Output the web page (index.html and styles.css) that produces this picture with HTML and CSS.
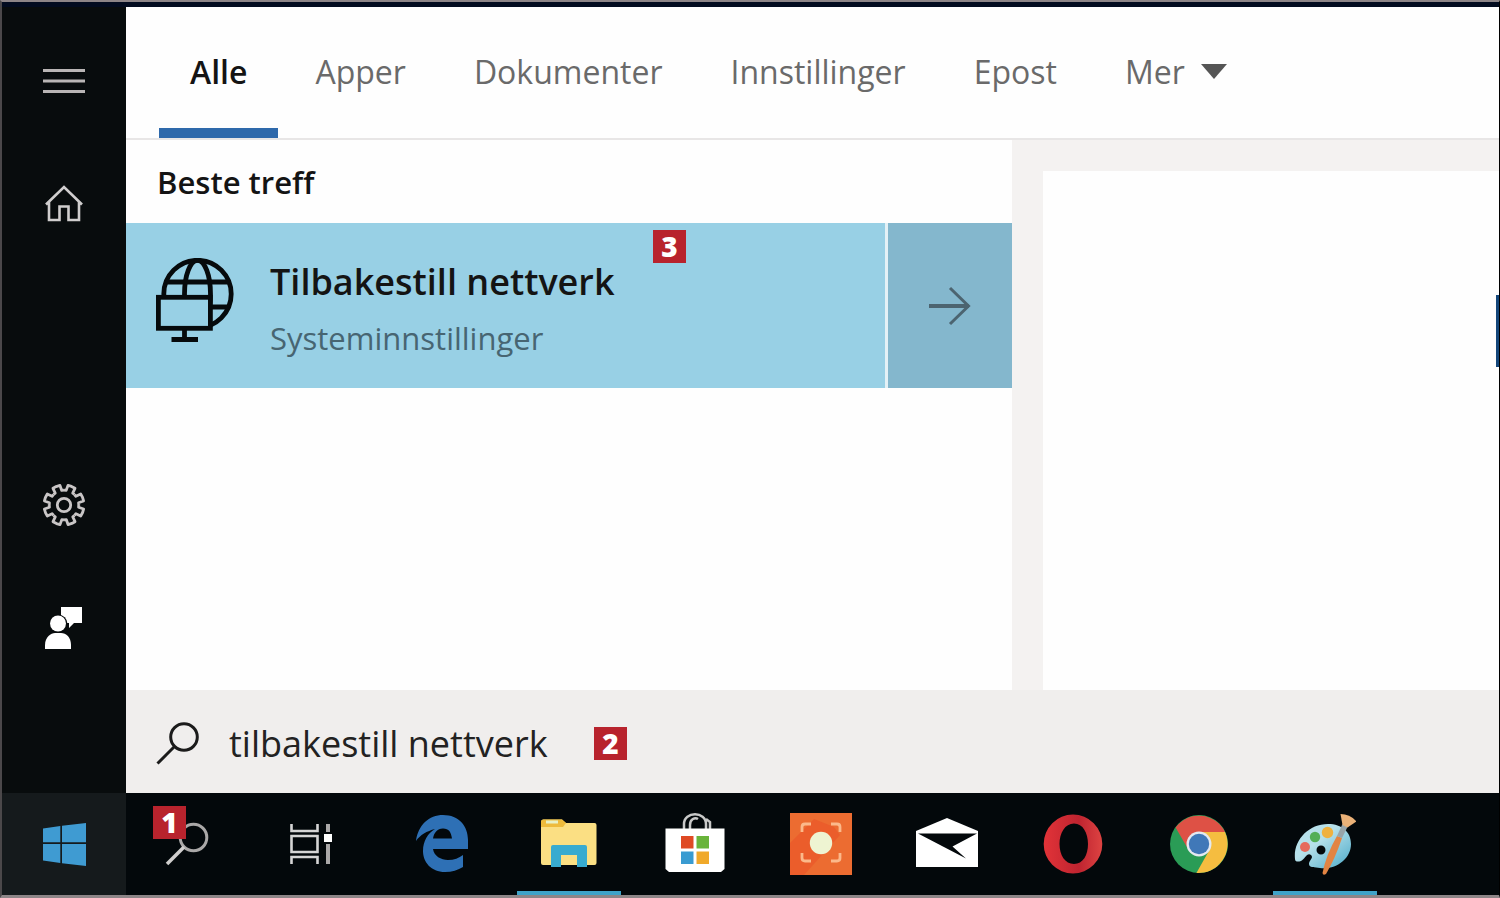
FILE: index.html
```html
<!DOCTYPE html>
<html lang="nb">
<head>
<meta charset="utf-8">
<meta name="viewport" content="width=device-width, initial-scale=1">
<title>Søk</title>
<link rel="stylesheet" href="styles.css">
</head>
<body>
<div class="desktop">
  <div class="panel">
    <nav class="rail" aria-label="Meny">
      <button class="rail-button" aria-label="Utvid">
        <svg width="42" height="24" viewBox="0 0 42 24" fill="none" stroke="#b9b5b5" stroke-width="3"><path d="M0 1.5H42M0 12H42M0 22.5H42"/></svg>
      </button>
      <button class="rail-button" aria-label="Hjem">
        <svg width="38" height="38" viewBox="0 0 38 38" fill="none" stroke="#d0cece" stroke-width="2.6"><path d="M1 19.5L19 2L37 19.5M4 17V35H14.5V21.500H23.5V35H34V17"/></svg>
      </button>
      <button class="rail-button rail-lower" aria-label="Innstillinger">
        <svg width="44" height="44" viewBox="-22 -22 44 44" fill="none" stroke="#c9c6c6" stroke-width="2.8" stroke-linejoin="round">
          <defs><path id="tooth" d="M0 -14.8L2.2 -14.6L4 -19.6L7.5 -18.6L11 -16.7L8.7 -11.9L10.5 -10.5"/></defs>
          <use href="#tooth"/><use href="#tooth" transform="rotate(45)"/><use href="#tooth" transform="rotate(90)"/><use href="#tooth" transform="rotate(135)"/>
          <use href="#tooth" transform="rotate(180)"/><use href="#tooth" transform="rotate(225)"/><use href="#tooth" transform="rotate(270)"/><use href="#tooth" transform="rotate(315)"/>
          <circle r="6.7"/>
        </svg>
      </button>
      <button class="rail-button" aria-label="Tilbakemelding">
        <svg width="38" height="42" viewBox="0 0 38 42" fill="#fff"><path d="M16 0H37V16H29L24 21V16H16Z"/><circle cx="13" cy="17" r="9.5" fill="#080c0d"/><circle cx="13" cy="16.5" r="8"/><path d="M0 42V38C0 30 6 26 10 26H16C21 26 26 30 26 38V42Z"/></svg>
      </button>
    </nav>

    <main class="search">
      <div class="tabs" role="tablist">
        <button class="tab active" role="tab" aria-selected="true">Alle</button>
        <button class="tab" role="tab">Apper</button>
        <button class="tab" role="tab">Dokumenter</button>
        <button class="tab" role="tab">Innstillinger</button>
        <button class="tab" role="tab">Epost</button>
        <button class="tab" role="tab">Mer <svg width="26" height="15" viewBox="0 0 26 15" fill="#555"><path d="M0 0H26L13 15Z"/></svg></button>
      </div>

      <div class="columns">
        <section class="results">
          <h2 class="heading">Beste treff</h2>
          <div class="match">
            <button class="match-main">
              <svg width="78" height="84" viewBox="0 0 78 84" fill="none" stroke="#060a0c" stroke-width="4.8">
                <circle cx="41.5" cy="36" r="33.7"/><ellipse cx="41.5" cy="36" rx="13" ry="33.7"/><path d="M10 24H74M10 49H74"/>
                <rect x="2.4" y="39.3" width="52" height="31" fill="#98d0e5"/><path d="M28.5 71V81M15.5 81.5H42"/>
              </svg>
              <span class="match-text">
                <span class="match-title">Tilbakestill nettverk</span>
                <span class="match-kind">Systeminnstillinger</span>
              </span>
            </button>
            <button class="match-open" aria-label="Åpne">
              <svg width="42" height="40" viewBox="0 0 42 40" fill="none" stroke="#4c6470" stroke-width="3"><path d="M0 20H40" stroke-width="4"/><path d="M21 2L39.500 20L21 38"/></svg>
            </button>
            <span class="badge badge-match">3</span>
          </div>
        </section>
        <aside class="preview"><div class="preview-card"><span class="preview-edge"></span></div></aside>
      </div>

      <form class="searchbar">
        <label for="query" aria-label="Søk"><svg width="44" height="44" viewBox="0 0 44 44" fill="none" stroke="#1b1b1b" stroke-width="3"><circle cx="28" cy="15" r="13.3"/><path d="M18.500 24.500L1.500 41.500"/></svg></label>
        <input id="query" class="query" type="text" value="tilbakestill nettverk">
        <span class="badge">2</span>
      </form>
    </main>
  </div>

  <footer class="taskbar">
    <button class="task start" aria-label="Start">
      <svg width="43" height="43" viewBox="0 0 43 43" fill="#3f9bd2"><path d="M0 5.500L17.300 3V19.300H0ZM19 2.800L43 0V19.300H19ZM0 21H17.300V40L0 37.500ZM19 21H43V43L19 40.200Z"/></svg>
    </button>
    <button class="task find" aria-label="Søk">
      <svg width="44" height="44" viewBox="0 0 44 44" fill="none" stroke="#aaa8a8" stroke-width="3"><circle cx="28.500" cy="15.500" r="13.300"/><path d="M19 25L2 42" stroke="#d0cece" stroke-width="3.500"/></svg>
      <span class="badge badge-find">1</span>
    </button>
    <button class="task views" aria-label="Oppgavevisning">
      <svg width="42" height="40" viewBox="0 0 42 40" fill="none" stroke="#d5d5d5" stroke-width="2.600"><path d="M1.500 0V7H27.500V0M1.500 40V33H27.500V40M1.500 12H27.500V28H1.500Z"/><path d="M38 0V8M38 20V40" stroke="#aaa8a8" stroke-width="4"/><path d="M34 10H42V18H34Z" fill="#fff" stroke="none"/></svg>
    </button>
    <button class="task" aria-label="Edge">
      <svg class="app" viewBox="0 0 62 62" fill="#2e70b5"><path fill-rule="evenodd" d="M4 28C6 12 17 2 31 2C47 2 56 13 56 27V36H21C22 43 29 47 36 47C42 47 47 45 51 42V54C46 57 40 59 33 59C19 59 11 49 11 38C11 28 16 20 23 16C15 18 8 22 4 28ZM21 25.500H40C39 19 37 15.500 31 15.500C25 15.500 22 20 21 25.500Z"/></svg>
    </button>
    <button class="task running" aria-label="Filutforsker">
      <svg class="app" viewBox="0 0 62 62"><path d="M3 9Q3 6.500 5.500 6.500H24L28 10H56.500Q58.500 10 58.500 12V50Q58.500 52 56.500 52H5Q3 52 3 50Z" fill="#fbdf83"/><path d="M3 9Q3 6.500 5.500 6.500H24L28 10L25 14H3Z" fill="#eebb3c"/><path d="M8 9H20" stroke="#e8f1c5" stroke-width="3"/><path d="M13 54V34Q13 32 15 32H47Q49 32 49 34V54H39V42H23V54Z" fill="#38abd0"/></svg>
    </button>
    <button class="task" aria-label="Store">
      <svg class="app" viewBox="0 0 62 62"><path d="M20 17V11C20 -2 42 -2 42 11V17M26 17V12C26 6 31 4 34 6M46 17V9L42 6" fill="none" stroke="#c9c9c9" stroke-width="2.500"/><path d="M1.500 15.500H60.500V56L57 59H5L1.500 56Z" fill="#fff"/><path d="M17 23H29.500V35.500H17Z" fill="#df4a24"/><path d="M32.500 23H45V35.500H32.500Z" fill="#69b43b"/><path d="M17 38.500H29.500V51H17Z" fill="#399bd1"/><path d="M32.500 38.500H45V51H32.500Z" fill="#f0a92b"/></svg>
    </button>
    <button class="task" aria-label="Skjermopptak">
      <svg class="app" viewBox="0 0 62 62"><path d="M0 0H62V62H0Z" fill="#ec6c31"/><path d="M0 30L24 6L44 14L50 22L14 62H0Z" fill="#eb5d2b"/><path d="M12 19V14Q12 11 15 11H21M41 11H47Q50 11 50 14V19M50 40V45Q50 48 47 48H41M21 48H15Q12 48 12 45V40" fill="none" stroke="#fbb98b" stroke-width="2.800"/><circle cx="31" cy="30" r="11.200" fill="#eef4d2"/></svg>
    </button>
    <button class="task" aria-label="E-post">
      <svg class="app" viewBox="0 0 62 62"><path d="M0 18L31 5L62 18V54H0Z" fill="#fff"/><path d="M2 20.500H61L36.500 33.500L50 45.500Z" fill="#03080b"/></svg>
    </button>
    <button class="task" aria-label="Opera">
      <svg class="app" viewBox="0 0 62 62"><defs><linearGradient id="opera" x1="0" x2="1" y1="0" y2="0"><stop offset="0" stop-color="#e23338"/><stop offset=".6" stop-color="#bf2430"/><stop offset="1" stop-color="#dd4342"/></linearGradient></defs><path fill="url(#opera)" fill-rule="evenodd" d="M31 1.500A29.300 29.500 0 1 0 31 60.500A29.300 29.500 0 1 0 31 1.500ZM32 10.500C41 10.500 46 20 46 31S41 51 32 51S17.500 42 17.500 31S23 10.500 32 10.500Z"/></svg>
    </button>
    <button class="task" aria-label="Chrome">
      <svg class="app" viewBox="0 0 62 62"><circle cx="31" cy="31" r="29" fill="#2a9c56"/><path d="M31 31V19H57A29 29 0 0 0 7.600 14.500L20.600 37Z" fill="#de5145"/><path d="M31 19H57A29 29 0 0 1 28.400 59.900L41.400 37Z" fill="#f5bd40"/><circle cx="31" cy="31" r="12.500" fill="#e4e9f0"/><circle cx="31" cy="31" r="10.200" fill="#4078b8"/></svg>
    </button>
    <button class="task running" aria-label="Paint">
      <svg class="app" viewBox="0 0 62 62"><defs><linearGradient id="palette" x1="0" x2="1" y1="0" y2="1"><stop offset=".4" stop-color="#b6e0ea"/><stop offset="1" stop-color="#4baac9"/></linearGradient></defs><path fill="url(#palette)" fill-rule="evenodd" d="M1 46C-1 28 14 11 34 11C48 11 57 19 57 31C57 46 42 57 26 55C21 54 15 55 15 51C15 47 20 45 17 42C13 39 11 46 7 48C4 49 1 49 1 46ZM27 32.500A4.500 4.500 0 1 0 27 41.500A4.500 4.500 0 1 0 27 32.500Z"/><circle cx="11" cy="34" r="5" fill="#e66a5c"/><circle cx="21" cy="24" r="5.200" fill="#53ae57"/><circle cx="33.500" cy="19.500" r="5.700" fill="#efb13f"/><path d="M28.500 60Q32 42 43 23L48 25Q41 46 32 61Q29 63 28.500 60Z" fill="#e28443"/><path d="M43 23L48.500 11L53.500 14L48 25Z" fill="#98a4a9"/><path d="M48.500 12L46.500 1Q56 1 62.500 8.500L53.500 14.500Z" fill="#eab178"/></svg>
    </button>
  </footer>
</div>
</body>
</html>
```
FILE: styles.css
```css
* {
  box-sizing: border-box;
}

body {
  margin: 0;
  font-family: "Open Sans", "Noto Sans", sans-serif;
  color: #141414;
}

button {
  margin: 0;
  padding: 0;
  border: 0;
  background: none;
  font: inherit;
  color: inherit;
}

svg {
  display: block;
  flex: none;
}

.desktop {
  display: flex;
  flex-direction: column;
  min-height: 100vh;
  border: 2px solid #8d8587;
  border-left-color: #4b484a;
  border-right: 1px solid #000;
  border-bottom-width: 3px;
  background: #03080b;
}

.panel {
  display: flex;
  flex: 1;
  border-top: 5px solid #020b1f;
}

.rail {
  display: flex;
  flex-direction: column;
  flex: none;
  width: 124px;
  padding: 12px 0 104px;
  background: #080c0d;
}

.rail-button {
  display: flex;
  align-items: center;
  justify-content: center;
  height: 123px;
}

.rail-lower {
  margin-top: auto;
}

.search {
  display: flex;
  flex-direction: column;
  flex: 1;
  min-width: 0;
  background: #fefefe;
}

.tabs {
  display: flex;
  gap: 6px;
  height: 133px;
  padding-left: 33px;
  border-bottom: 2px solid #e8e6e6;
}

.tab {
  display: flex;
  align-items: center;
  gap: 16px;
  padding: 8px 31px 0;
  border-bottom: 10px solid transparent;
  font-size: 32px;
  line-height: 40px;
  color: #6a6a6a;
}

.tab.active {
  border-bottom-color: #2e69ab;
  font-weight: 600;
  color: #141414;
}

.columns {
  display: grid;
  grid-template-columns: 886fr 487fr;
  flex: 1;
}

.heading {
  margin: 0;
  padding: 22px 31px 20px;
  font-size: 31px;
  font-weight: 600;
  line-height: 41px;
}

.match {
  position: relative;
  display: flex;
  gap: 3px;
  height: 165px;
  background: #e4f1f6;
}

.match-main {
  display: flex;
  align-items: flex-start;
  flex: 1;
  gap: 36px;
  padding: 35px 30px 0;
  background: #98d0e5;
  text-align: left;
}

.match-text {
  display: flex;
  flex-direction: column;
  gap: 8px;
}

.match-title {
  font-size: 36px;
  font-weight: 600;
  line-height: 48px;
}

.match-kind {
  font-size: 31px;
  line-height: 48px;
  color: #476572;
}

.match-open {
  display: flex;
  align-items: center;
  justify-content: center;
  width: 124px;
  background: #84b7cd;
}

.preview {
  display: flex;
  padding: 31px 0 0 31px;
  background: #f4f2f1;
}

.preview-card {
  display: flex;
  flex: 1;
  justify-content: flex-end;
  background: #fefefe;
}

.preview-edge {
  width: 3px;
  height: 72px;
  margin-top: 124px;
  background: #13467a;
}

.searchbar {
  display: flex;
  align-items: center;
  height: 103px;
  padding: 4px 30px 0;
  background: #f0eeed;
}

.query {
  width: 365px;
  margin-left: 29px;
  padding: 0;
  border: 0;
  outline: 0;
  background: none;
  font: inherit;
  font-size: 36px;
  line-height: 48px;
  color: #222;
}

.badge {
  width: 33px;
  height: 33px;
  background: #b8232d;
  font-size: 28px;
  font-weight: 800;
  line-height: 33px;
  text-align: center;
  color: #fff;
}

.badge-match {
  position: absolute;
  top: 7px;
  left: 527px;
}

.badge-find {
  position: absolute;
  top: 13px;
  left: 27px;
}

.taskbar {
  display: flex;
  height: 102px;
}

.task {
  position: relative;
  display: flex;
  align-items: center;
  justify-content: center;
  flex: none;
  width: 126px;
}

.start {
  width: 124px;
  background: #151a1c;
}

.find {
  width: 122px;
}

.views {
  margin-right: 6px;
}

.app {
  width: 62px;
  height: 62px;
}

.running::after {
  content: "";
  position: absolute;
  right: 11px;
  bottom: 0;
  left: 11px;
  height: 4px;
  background: #3fa3c8;
}
```
